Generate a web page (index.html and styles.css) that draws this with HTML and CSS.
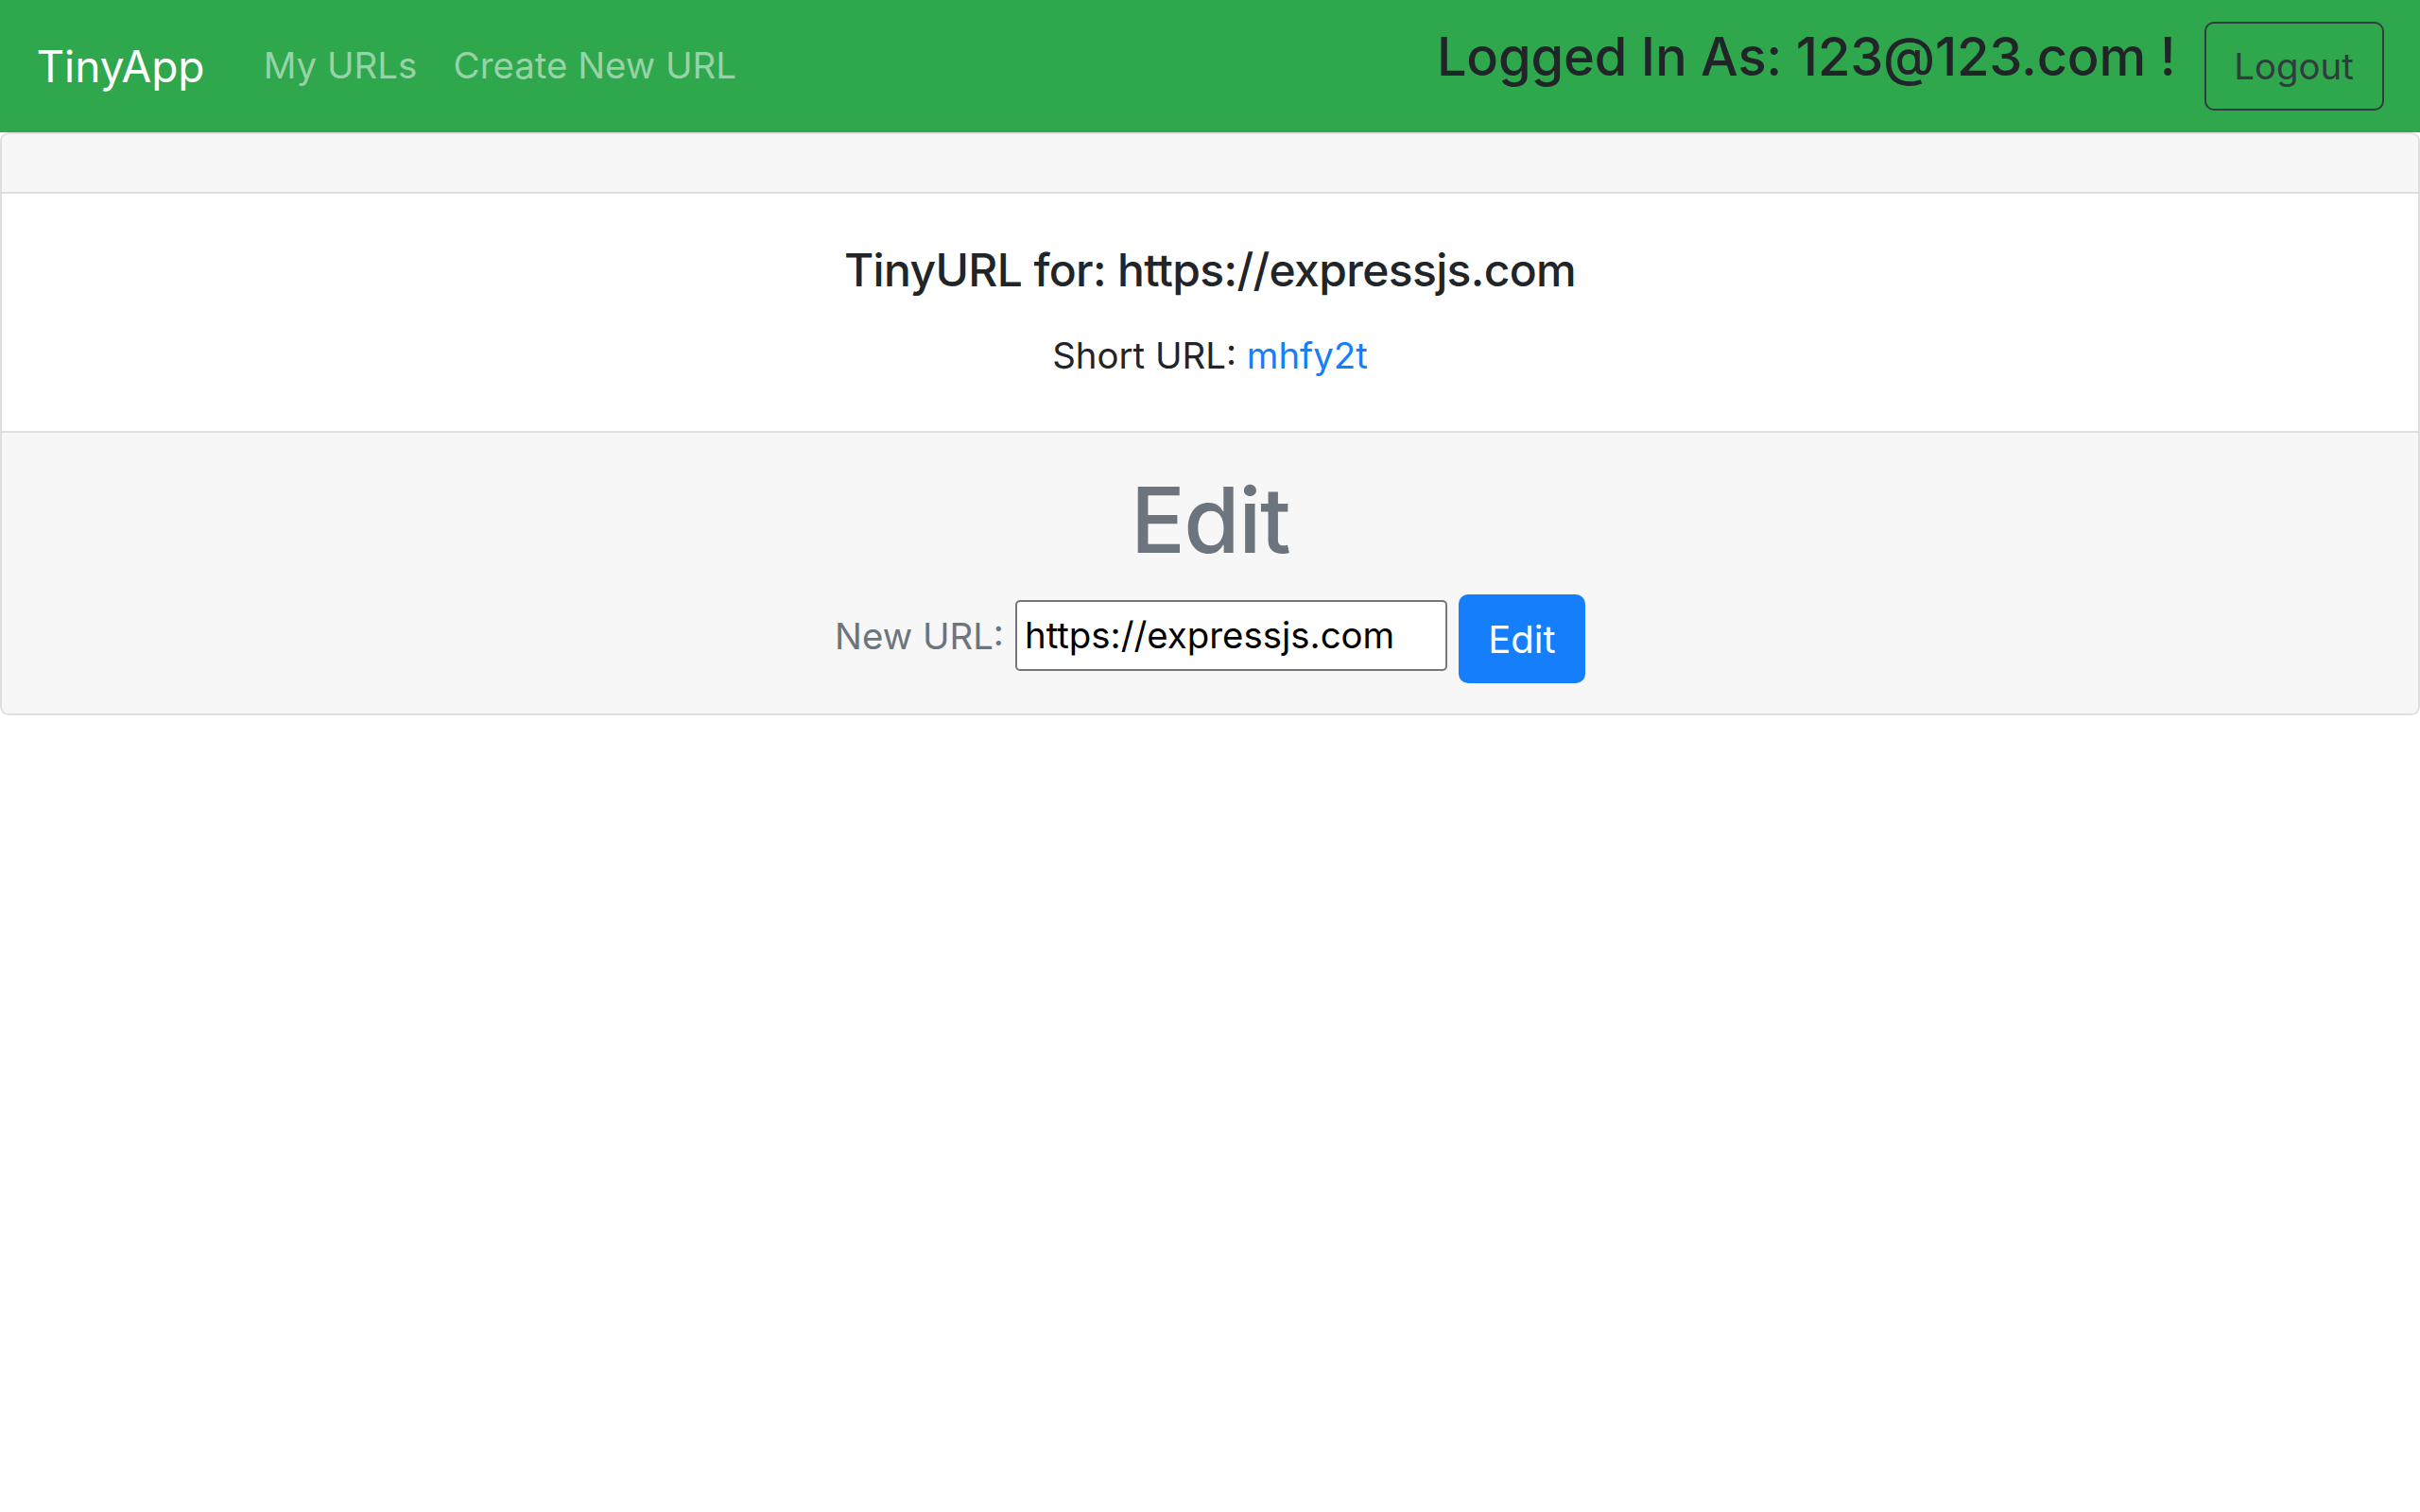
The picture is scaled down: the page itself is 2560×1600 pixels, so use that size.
FILE: index.html
```html
<!DOCTYPE html>
<html lang="en">
<head>
<meta charset="utf-8">
<title>TinyApp</title>
<link rel="stylesheet" href="styles.css">
</head>
<body>
<nav class="navbar">
  <a class="brand" href="#">TinyApp</a>
  <ul class="nav">
    <li><a class="nav-link" href="#">My URLs</a></li>
    <li><a class="nav-link" href="#">Create New URL</a></li>
  </ul>
  <div class="user">
    <h4 class="logged">Logged In As: 123@123.com !</h4>
    <button class="btn-logout" type="button">Logout</button>
  </div>
</nav>
<main class="card">
  <div class="card-header"></div>
  <div class="card-body">
    <h5 class="card-title">TinyURL for: https://expressjs.com</h5>
    <p class="card-text">Short URL: <a class="link" href="#">mhfy2t</a></p>
  </div>
  <div class="card-footer">
    <h1 class="edit-title">Edit</h1>
    <form class="edit-form">
      <label class="edit-label" for="newurl">New URL:</label>
      <input class="edit-input" id="newurl" type="text" value="https://expressjs.com">
      <button class="btn-edit" type="button">Edit</button>
    </form>
  </div>
</main>
</body>
</html>
```
FILE: styles.css
```css
* { box-sizing: border-box; }
html, body { margin: 0; padding: 0; }
body {
  font-family: Inter, "Noto Sans", "Liberation Sans", sans-serif;
  font-size: 38.4px;
  line-height: 1.5;
  color: #212529;
  background: #ffffff;
}
a { text-decoration: none; }

.navbar {
  display: flex;
  align-items: center;
  height: 140px;
  padding: 19.2px 38.4px;
  background: #2fa74d;
}
.brand {
  font-size: 46px;
  line-height: 72px;
  padding: 15px 0;
  margin-right: 43px;
  color: #ffffff;
}
.nav {
  display: flex;
  list-style: none;
  margin: 0;
  padding: 0;
}
.nav-link {
  display: block;
  padding: 0 19.2px;
  line-height: 57.6px;
  color: #97d3a6;
}
.user {
  margin-left: auto;
  display: flex;
  align-items: center;
}
.logged {
  margin: 0 0 19.2px 0;
  font-size: 56px;
  font-weight: 500;
  line-height: 1.2;
  letter-spacing: -0.2px;
  color: #212529;
}
.btn-logout {
  margin-left: 30px;
  width: 190px;
  height: 94px;
  padding: 0;
  font-family: inherit;
  font-size: 38.4px;
  color: #343a40;
  background: transparent;
  border: 2.4px solid #343a40;
  border-radius: 10px;
}

.card {
  display: block;
  border: 2.4px solid #dfdfdf;
  border-radius: 9.6px;
  overflow: hidden;
}
.card-header {
  height: 62.5px;
  background: #f7f7f7;
  border-bottom: 2.4px solid #dfdfdf;
}
.card-body {
  padding: 52px 48px 51px;
  text-align: center;
  background: #ffffff;
}
.card-title {
  margin: 0 0 33.6px;
  font-size: 48px;
  font-weight: 500;
  line-height: 1.2;
  letter-spacing: -0.65px;
}
.card-text { margin: 0; }
.link { color: #157ffb; }

.card-footer {
  padding: 34.6px 48px 31.5px;
  text-align: center;
  background: #f7f7f7;
  border-top: 2.4px solid #dfdfdf;
}
.edit-title {
  margin: 0 0 21px;
  font-size: 96px;
  font-weight: 500;
  line-height: 1.2;
  letter-spacing: -1.5px;
  color: #6c757d;
}
.edit-form {
  display: flex;
  justify-content: center;
  align-items: center;
  gap: 12px;
}
.edit-label {
  font-size: 38.4px;
  color: #6c757d;
  margin-bottom: 4px;
}
.edit-input {
  width: 457px;
  height: 75px;
  margin-bottom: 8px;
  padding: 0 8px;
  font-family: inherit;
  font-size: 38.4px;
  color: #000000;
  background: #ffffff;
  border: 2.4px solid #767676;
  border-radius: 5px;
}
.btn-edit {
  width: 134px;
  height: 94px;
  padding: 0;
  font-family: inherit;
  font-size: 40px;
  color: #ffffff;
  background: #157ffb;
  border: none;
  border-radius: 10px;
}
```
